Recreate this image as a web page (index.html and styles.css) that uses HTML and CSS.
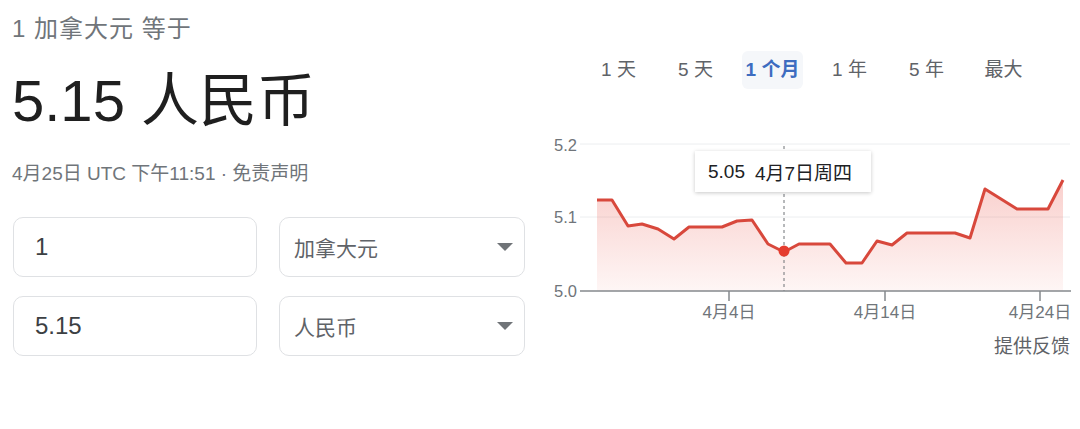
FILE: index.html
```html
<!DOCTYPE html>
<html lang="zh">

<head>
    <meta charset="UTF-8">
    <meta name="viewport" content="width=device-width, initial-scale=1.0">
    <title>货币换算</title>
    <link rel="stylesheet" href="styles.css">
</head>

<body>
    <div class="page">
        <div class="converter">
            <div class="eyebrow">1 加拿大元 等于</div>
            <div class="amount">5.15 人民币</div>
            <div class="updated">4月25日 UTC 下午11:51 · 免责声明</div>

            <div class="rows">
                <div class="row">
                    <div class="field">1</div>
                    <div class="select">
                        <span>加拿大元</span>
                        <i class="caret"></i>
                    </div>
                </div>
                <div class="row">
                    <div class="field">5.15</div>
                    <div class="select">
                        <span>人民币</span>
                        <i class="caret"></i>
                    </div>
                </div>
            </div>
        </div>

        <div class="chart-panel">
            <div class="tabs">
                <div class="tab"><span>1 天</span></div>
                <div class="tab"><span>5 天</span></div>
                <div class="tab active"><span>1 个月</span></div>
                <div class="tab"><span>1 年</span></div>
                <div class="tab"><span>5 年</span></div>
                <div class="tab"><span>最大</span></div>
            </div>

            <div class="chart">
                <svg width="540" height="200" viewBox="540 130 540 200">
                    <defs>
                        <linearGradient id="area" x1="0" y1="0" x2="0" y2="1">
                            <stop offset="0" stop-color="#e9473b" stop-opacity="0.26" />
                            <stop offset="1" stop-color="#e9473b" stop-opacity="0.05" />
                        </linearGradient>
                    </defs>

                    <!-- 网格线 -->
                    <line x1="580" y1="144" x2="1070" y2="144" stroke="#eceef0" stroke-width="1" />
                    <line x1="580" y1="217" x2="1070" y2="217" stroke="#eceef0" stroke-width="1" />

                    <text class="axis-label" x="554" y="151">5.2</text>
                    <text class="axis-label" x="554" y="223">5.1</text>
                    <text class="axis-label" x="554" y="297">5.0</text>

                    <!-- 面积 + 折线 -->
                    <polygon fill="url(#area)" points="597,200 612,200 628,226 642,224 658,229 674,239 689,227 722,227 737,221 752,220 768,244 784,252 799,244 830,244 846,263 862,263 877,241 892,245 907,233 955,233 970,238 985,189 1017,209 1048,209 1063,180 1063,291 597,291" />
                    <polyline fill="none" stroke="#d8483c" stroke-width="3" stroke-linejoin="round" points="597,200 612,200 628,226 642,224 658,229 674,239 689,227 722,227 737,221 752,220 768,244 784,252 799,244 830,244 846,263 862,263 877,241 892,245 907,233 955,233 970,238 985,189 1017,209 1048,209 1063,180" />

                    <line x1="784" y1="146" x2="784" y2="291" stroke="#6f7377" stroke-width="1" stroke-dasharray="3 3" />

                    <!-- 横轴 -->
                    <line x1="580" y1="291" x2="1071" y2="291" stroke="#85898d" stroke-width="1.5" />
                    <line x1="729" y1="291" x2="729" y2="301" stroke="#85898d" stroke-width="1.5" />
                    <line x1="885" y1="291" x2="885" y2="301" stroke="#85898d" stroke-width="1.5" />
                    <line x1="1040" y1="291" x2="1040" y2="301" stroke="#85898d" stroke-width="1.5" />

                    <text class="tick-label" x="729" y="318">4月4日</text>
                    <text class="tick-label" x="885" y="318">4月14日</text>
                    <text class="tick-label" x="1040" y="318">4月24日</text>

                    <circle cx="784" cy="251" r="5.5" fill="#e53c2f" />
                </svg>

                <div class="tooltip">
                    <span class="tip-value">5.05</span>
                    <span>4月7日周四</span>
                </div>
            </div>

            <div class="feedback">提供反馈</div>
        </div>
    </div>
</body>

</html>
```

FILE: styles.css
```css
:root {
    --text: #202124;
    --muted: #70757a;
    --border: #dfe1e4;
    --blue: #3d6cc0;
}

body {
    margin: 0;
    background: #fff;
    color: var(--text);
    font-family: 'Liberation Sans', Arial, 'Noto Sans CJK SC', sans-serif;
}

.page {
    display: flex;
    width: 1080px;
    height: 429px;
}

/* 左侧换算 */
.converter {
    width: 528px;
    padding: 14px 0 0 12px;
}

.eyebrow {
    font-size: 24px;
    line-height: 30px;
    letter-spacing: 1px;
    color: var(--muted);
}

.amount {
    margin-top: 25px;
    font-size: 58px;
    line-height: 64px;
    color: #1f1f1f;
}

.updated {
    margin-top: 28px;
    font-size: 19px;
    line-height: 26px;
    color: var(--muted);
}

.rows {
    margin-top: 30px;
    display: flex;
    flex-direction: column;
    gap: 19px;
}

.row {
    display: flex;
    gap: 22px;
    padding-left: 1px;
}

.field,
.select {
    box-sizing: border-box;
    height: 60px;
    border: 1px solid var(--border);
    border-radius: 10px;
    display: flex;
    align-items: center;
}

.field {
    width: 244px;
    padding-left: 21px;
    font-size: 24px;
    color: #3c4043;
}

.select {
    width: 246px;
    padding: 0 11px 0 14px;
    justify-content: space-between;
    font-size: 21px;
    color: #5f6368;
}

.caret {
    width: 0;
    height: 0;
    border-left: 8px solid transparent;
    border-right: 8px solid transparent;
    border-top: 8px solid #707478;
}

/* 右侧图表 */
.chart-panel {
    flex: 1;
    padding-top: 51px;
}

.tabs {
    display: flex;
    padding-left: 40px;
}

.tab {
    width: 77px;
    text-align: center;
    font-size: 19px;
    line-height: 38px;
    color: #5f6368;
}

.tab span {
    display: inline-block;
    padding: 0 4px;
    border-radius: 6px;
}

.tab.active span {
    background: #f5f7fa;
    color: var(--blue);
    font-weight: bold;
}

.chart {
    position: relative;
    margin-top: 41px;
    height: 200px;
}

.chart svg {
    display: block;
}

.axis-label {
    font-size: 16.5px;
    fill: var(--muted);
}

.tick-label {
    font-size: 17px;
    fill: var(--muted);
    text-anchor: middle;
}

.tooltip {
    position: absolute;
    left: 155px;
    top: 21px;
    box-sizing: border-box;
    width: 176px;
    height: 41px;
    padding-left: 13px;
    background: #fff;
    box-shadow: 0 1px 4px rgba(0, 0, 0, 0.22);
    display: flex;
    align-items: center;
    gap: 10px;
    font-size: 19px;
    color: var(--text);
}

.feedback {
    margin-top: 5px;
    padding-right: 10px;
    text-align: right;
    font-size: 19px;
    line-height: 24px;
    color: #5f6368;
}
```
